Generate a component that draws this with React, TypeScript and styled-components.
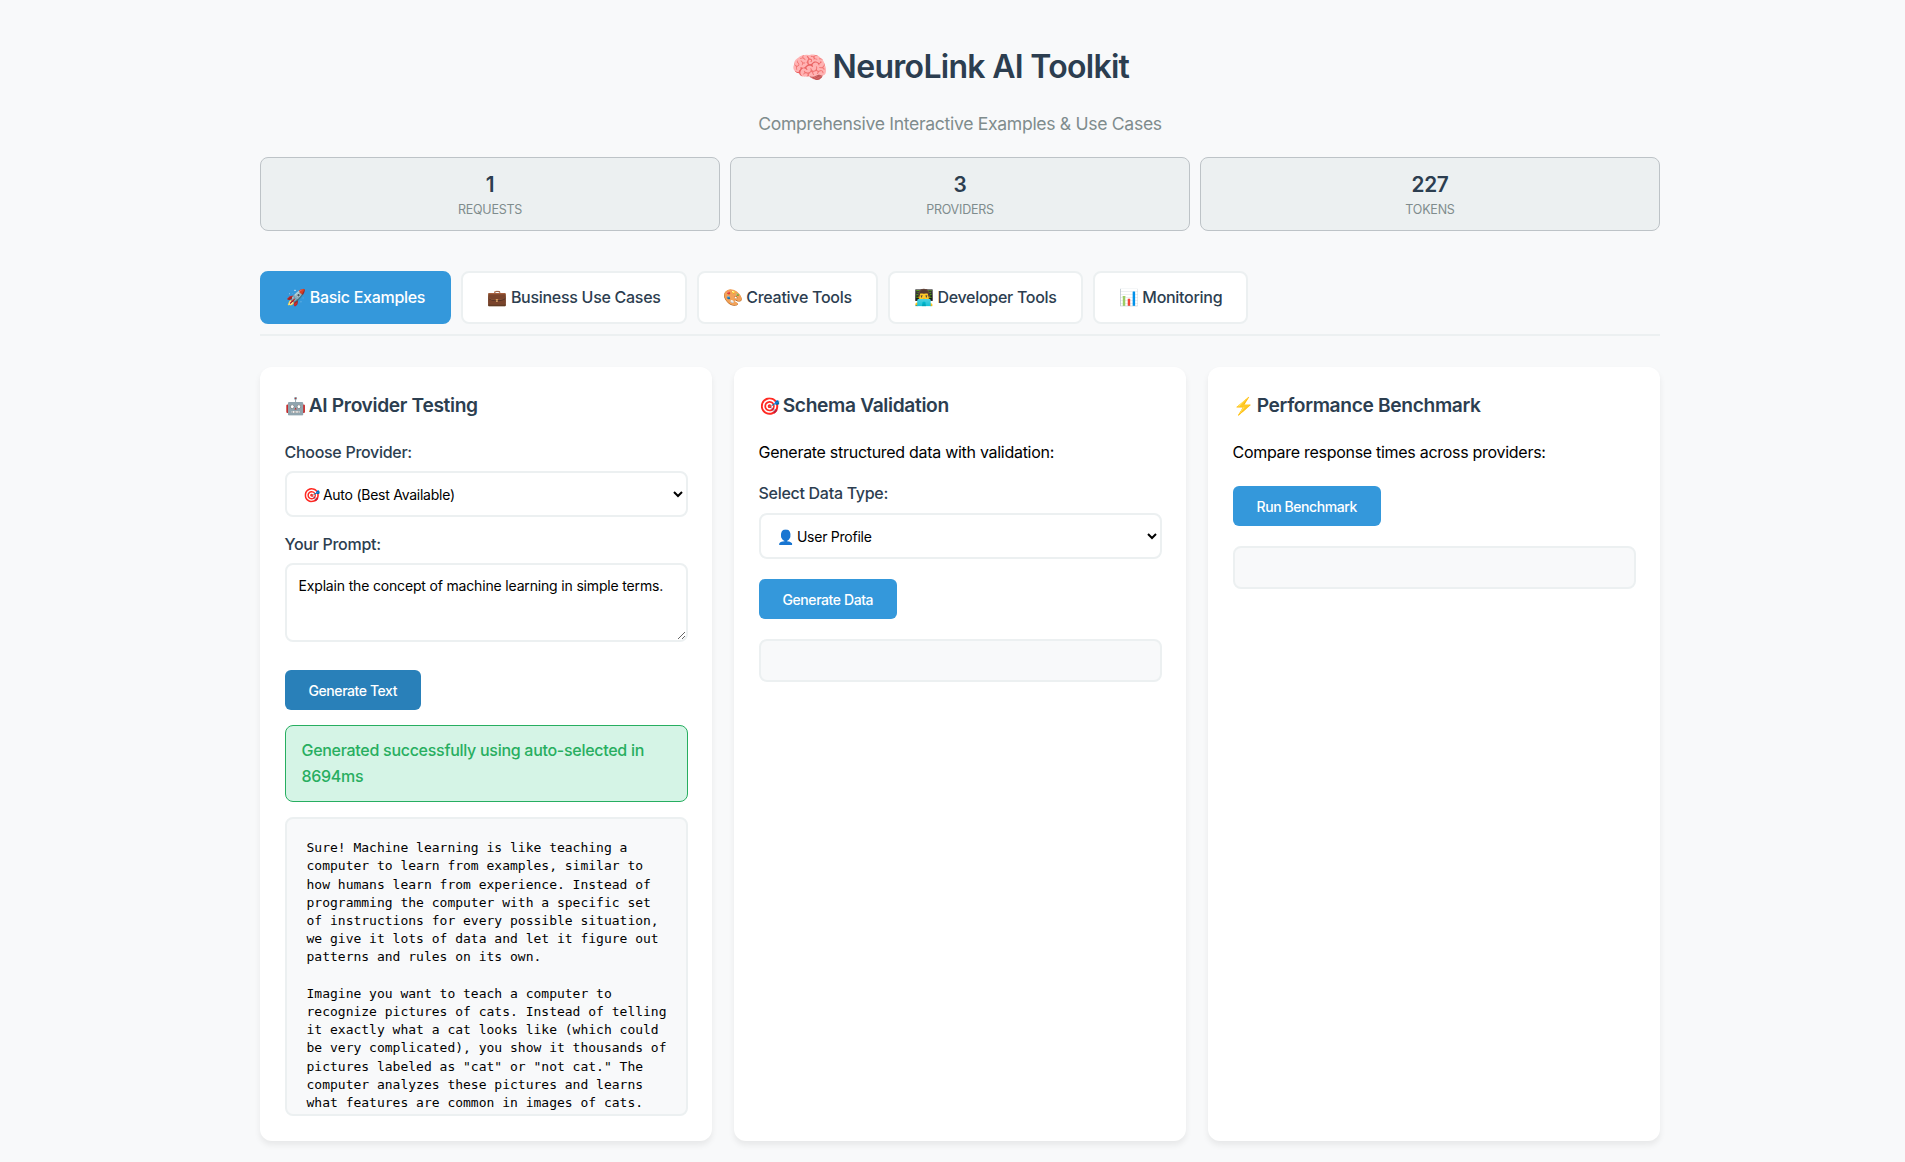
import styled, { createGlobalStyle } from "styled-components";

const GlobalStyle = createGlobalStyle`
  * {
    box-sizing: border-box;
    letter-spacing: -0.018em;
  }
  body {
    margin: 0;
    background: #f8f9fa;
    font-family: Inter, "Noto Sans", sans-serif;
    line-height: 1.6;
  }
`;

const Page = styled.div`
  width: 1400px;
  margin-left: 260px;
  padding: 47px 0 21px;
`;

const Header = styled.header`
  text-align: center;
`;

const Title = styled.h1`
  margin: 0 0 23px;
  font-size: 32px;
  line-height: 40px;
  font-weight: 600;
  letter-spacing: -0.022em;
  color: #2c3e50;
`;

const TitleGlyph = styled.span`
  margin-right: -2px;
  font-size: 30px;
  line-height: 1;
`;

const CardGlyph = styled.span`
  margin-right: -1px;
  font-size: 17px;
  line-height: 1;
`;

const Subtitle = styled.p`
  margin: 0 0 19px;
  font-size: 17.6px;
  line-height: 28px;
  color: #7f8c8d;
`;

const Stats = styled.div`
  display: grid;
  grid-template-columns: repeat(3, 1fr);
  gap: 10px;
  margin-bottom: 40px;
`;

const Stat = styled.div`
  height: 74px;
  padding-top: 12px;
  background: #ecf0f1;
  border: 1px solid #bdc3c7;
  border-radius: 8px;
  text-align: center;
`;

const StatValue = styled.div`
  font-size: 20.8px;
  line-height: 30px;
  font-weight: 600;
  color: #2c3e50;
`;

const StatLabel = styled.div`
  margin-top: 1px;
  font-size: 12.5px;
  line-height: 18px;
  color: #7f8c8d;
  text-transform: uppercase;
`;

const Tabs = styled.nav`
  display: flex;
  gap: 10px;
  padding-bottom: 10px;
  margin-bottom: 31px;
  border-bottom: 2px solid #ecf0f1;
`;

const Tab = styled.button<{ $active?: boolean }>`
  height: 53px;
  padding: 0 24px 2px;
  background: ${({ $active }) => ($active ? "#3498db" : "#fff")};
  color: ${({ $active }) => ($active ? "#fff" : "#2c3e50")};
  border: 2px solid ${({ $active }) => ($active ? "#3498db" : "#ecf0f1")};
  border-radius: 8px;
  font: 500 16px Inter, sans-serif;
`;

const Cards = styled.div`
  display: grid;
  grid-template-columns: repeat(3, 1fr);
  gap: 22px;
`;

const Card = styled.section`
  height: 774px;
  padding: 25px 24.5px;
  background: #fff;
  border-radius: 12px;
  box-shadow: 0 4px 6px rgba(0, 0, 0, 0.07);
`;

const CardTitle = styled.h3`
  height: 27px;
  margin: 0 0 20px;
  font-size: 19.2px;
  line-height: 27px;
  font-weight: 600;
  color: #2c3e50;
`;

const Label = styled.label`
  display: block;
  margin-bottom: 6px;
  font-size: 16px;
  line-height: 26px;
  font-weight: 500;
  color: #2c3e50;
`;

const DataLabel = styled(Label)`
  margin-bottom: 7px;
`;

const Text = styled.p`
  margin: 0 0 15px;
  font-size: 16px;
  line-height: 26px;
  color: #000;
`;

const BenchmarkText = styled(Text)`
  margin-bottom: 21px;
`;

const Select = styled.select<{ $gap: number }>`
  display: block;
  width: 100%;
  height: 46px;
  margin-bottom: ${({ $gap }) => $gap}px;
  padding: 0 12px;
  background: #fff;
  border: 2px solid #ecf0f1;
  border-radius: 8px;
  font: 14px Inter, sans-serif;
  color: #000;
`;

const Prompt = styled.textarea`
  display: block;
  width: 100%;
  height: 79px;
  margin-bottom: 28px;
  padding: 11px 12px;
  border: 2px solid #ecf0f1;
  border-radius: 8px;
  font: 14px/20px Inter, sans-serif;
  letter-spacing: -0.012em;
  color: #000;
  outline: none;
`;

const Action = styled.button<{ $hover?: boolean }>`
  display: block;
  height: 40px;
  padding: 0 24px;
  margin-bottom: ${({ $hover }) => ($hover ? 15 : 20)}px;
  background: ${({ $hover }) => ($hover ? "#2980b9" : "#3498db")};
  color: #fff;
  border: 0;
  border-radius: 6px;
  font: 500 14px Inter, sans-serif;
  letter-spacing: -0.03em;
`;

const Success = styled.div`
  margin-bottom: 15px;
  padding: 12px 16px;
  background: #d5f4e6;
  border: 1px solid #27ae60;
  border-radius: 8px;
  color: #27ae60;
  font-size: 16px;
  font-weight: 500;
  line-height: 25.6px;
`;

const Output = styled.pre`
  height: 299px;
  margin: 0;
  padding: 20px 14px 0 20px;
  overflow: hidden;
  background: #f8f9fa;
  border: 2px solid #ecf0f1;
  border-radius: 8px;
  font: 13px/18.2px "DejaVu Sans Mono", monospace;
  letter-spacing: 0;
  color: #000;
  white-space: pre-wrap;
`;

const EmptyResult = styled.div`
  height: 43px;
  background: #f8f9fa;
  border: 2px solid #ecf0f1;
  border-radius: 8px;
`;

const answer = `Sure! Machine learning is like teaching a computer to learn from examples, similar to how humans learn from experience. Instead of programming the computer with a specific set of instructions for every possible situation, we give it lots of data and let it figure out patterns and rules on its own.

Imagine you want to teach a computer to recognize pictures of cats. Instead of telling it exactly what a cat looks like (which could be very complicated), you show it thousands of pictures labeled as "cat" or "not cat." The computer analyzes these pictures and learns what features are common in images of cats.`;

export default function App() {
  return (
    <>
      <GlobalStyle />
      <Page>
        <Header>
          <Title><TitleGlyph>🧠</TitleGlyph> NeuroLink AI Toolkit</Title>
          <Subtitle>Comprehensive Interactive Examples &amp; Use Cases</Subtitle>
        </Header>
        <Stats>
          <Stat><StatValue>1</StatValue><StatLabel>Requests</StatLabel></Stat>
          <Stat><StatValue>3</StatValue><StatLabel>Providers</StatLabel></Stat>
          <Stat><StatValue>227</StatValue><StatLabel>Tokens</StatLabel></Stat>
        </Stats>
        <Tabs>
          <Tab $active>🚀 Basic Examples</Tab>
          <Tab>💼 Business Use Cases</Tab>
          <Tab>🎨 Creative Tools</Tab>
          <Tab>👨‍💻 Developer Tools</Tab>
          <Tab>📊 Monitoring</Tab>
        </Tabs>
        <Cards>
          <Card>
            <CardTitle><CardGlyph>🤖</CardGlyph> AI Provider Testing</CardTitle>
            <Label>Choose Provider:</Label>
            <Select $gap={14} defaultValue="auto"><option value="auto">🎯 Auto (Best Available)</option></Select>
            <Label>Your Prompt:</Label>
            <Prompt defaultValue="Explain the concept of machine learning in simple terms." />
            <Action $hover>Generate Text</Action>
            <Success>Generated successfully using auto-selected in 8694ms</Success>
            <Output>{answer}</Output>
          </Card>
          <Card>
            <CardTitle><CardGlyph>🎯</CardGlyph> Schema Validation</CardTitle>
            <Text>Generate structured data with validation:</Text>
            <DataLabel>Select Data Type:</DataLabel>
            <Select $gap={20}><option>👤 User Profile</option></Select>
            <Action>Generate Data</Action>
            <EmptyResult />
          </Card>
          <Card>
            <CardTitle><CardGlyph>⚡</CardGlyph> Performance Benchmark</CardTitle>
            <BenchmarkText>Compare response times across providers:</BenchmarkText>
            <Action>Run Benchmark</Action>
            <EmptyResult />
          </Card>
        </Cards>
      </Page>
    </>
  );
}
